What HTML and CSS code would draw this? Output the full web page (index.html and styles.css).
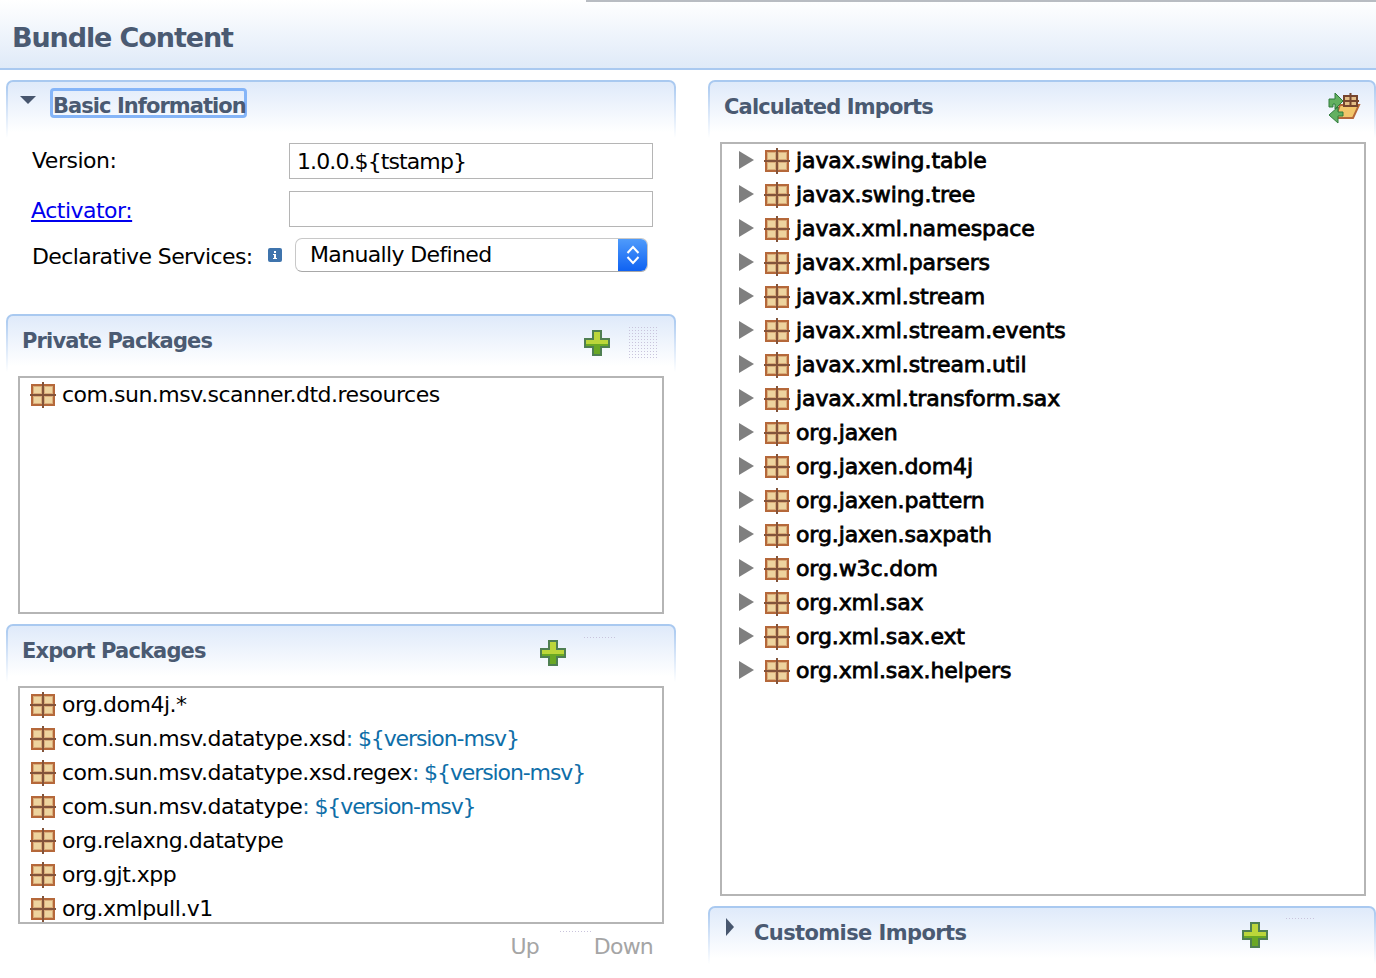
FILE: index.html
```html
<!DOCTYPE html>
<html lang="en">
<head>
  <meta charset="UTF-8" />
  <title>Bundle Content</title>
  <link rel="stylesheet" href="styles.css">
</head>
<body>
  <svg class="defs" width="0" height="0">
    <symbol id="pkg" viewBox="0 0 26 26">
      <rect x="2" y="3" width="22" height="20" fill="#d9ad7a" stroke="#b5683a" stroke-width="2"/>
      <rect x="4" y="5" width="7" height="6" fill="#eed49e"/>
      <rect x="15" y="5" width="7" height="6" fill="#eed49e"/>
      <rect x="4" y="15" width="7" height="6" fill="#eed49e"/>
      <rect x="15" y="15" width="7" height="6" fill="#eed49e"/>
      <path d="M13 0v26M0 13h26" stroke="#83543a" stroke-width="2"/>
    </symbol>
    <symbol id="plus" viewBox="0 0 26 26">
      <path d="M8 0h10v8h8v10h-8v8H8v-8H0V8h8z" fill="#4f7f52"/>
      <path d="M10 2h6v8h8v6h-8v8h-6v-8H2v-6h8z" fill="#6aa824"/>
      <path d="M10 2h6v8h8v4H2v-4h8z" fill="#bcd63a"/>
    </symbol>
  </svg>

  <header class="page-head">
    <h1>Bundle Content</h1>
  </header>

  <main class="columns">
    <div class="col col-left">
      <section class="sect sect-basic">
        <div class="sect-head">
          <div class="sect-inner">
            <span class="twist twist-open"></span>
            <h2 class="focus-box">Basic Information</h2>
          </div>
        </div>
        <div class="form">
          <div class="form-row row-version">
            <label>Version:</label>
            <div class="field">1.0.0.${tstamp}</div>
          </div>
          <div class="form-row row-activator">
            <a href="#">Activator:</a>
            <div class="field"></div>
          </div>
          <div class="form-row row-ds">
            <label>Declarative Services:</label>
            <svg class="info" width="14" height="14" viewBox="0 0 14 14">
              <rect width="14" height="14" rx="2" fill="#3f74ad"/>
              <path d="M6 3h2v2H6zM5 6h3v4h1v1H5v-1h1V7H5z" fill="#fff"/>
            </svg>
            <div class="select">
              <span class="select-text">Manually Defined</span>
              <span class="select-btn">
                <svg width="14" height="24" viewBox="0 0 14 24">
                  <path d="M1.500 10 7 4l5.500 6M1.500 14 7 20l5.500-6" fill="none" stroke="#fff" stroke-width="2"/>
                </svg>
              </span>
            </div>
          </div>
        </div>
      </section>

      <section class="sect sect-private">
        <div class="sect-head">
          <div class="sect-inner">
            <h2>Private Packages</h2>
            <svg class="act act-private" width="26" height="26"><use href="#plus"/></svg>
          </div>
        </div>
        <ul class="list list-private">
          <li><svg class="pkg" width="26" height="26"><use href="#pkg"/></svg>com.sun.msv.scanner.dtd.resources</li>
        </ul>
      </section>

      <section class="sect sect-export">
        <div class="sect-head">
          <div class="sect-inner">
            <h2>Export Packages</h2>
            <svg class="act act-export" width="26" height="26"><use href="#plus"/></svg>
          </div>
        </div>
        <ul class="list list-export">
          <li><svg class="pkg" width="26" height="26"><use href="#pkg"/></svg>org.dom4j.*</li>
          <li><svg class="pkg" width="26" height="26"><use href="#pkg"/></svg>com.sun.msv.datatype.xsd<span class="ver">: ${version-msv}</span></li>
          <li><svg class="pkg" width="26" height="26"><use href="#pkg"/></svg>com.sun.msv.datatype.xsd.regex<span class="ver">: ${version-msv}</span></li>
          <li><svg class="pkg" width="26" height="26"><use href="#pkg"/></svg>com.sun.msv.datatype<span class="ver">: ${version-msv}</span></li>
          <li><svg class="pkg" width="26" height="26"><use href="#pkg"/></svg>org.relaxng.datatype</li>
          <li><svg class="pkg" width="26" height="26"><use href="#pkg"/></svg>org.gjt.xpp</li>
          <li><svg class="pkg" width="26" height="26"><use href="#pkg"/></svg>org.xmlpull.v1</li>
        </ul>
        <div class="updown">
          <span>Up</span>
          <span>Down</span>
        </div>
      </section>
    </div>

    <div class="col col-right">
      <section class="sect sect-calc">
        <div class="sect-head">
          <div class="sect-inner">
            <h2>Calculated Imports</h2>
            <svg class="act act-calc" width="34" height="34" viewBox="0 0 34 34">
              <path d="M13 14h19l-6 13H8z" fill="#f2c66a" stroke="#b5683a" stroke-width="2"/>
              <path d="M17 5h13v10H17z" fill="#e3bd85" stroke="#75452f" stroke-width="2"/>
              <path d="M23.500 2v14M15 10h17" stroke="#75452f" stroke-width="2"/>
              <path d="M2 8h6V2l8 8-8 8v-5H6v3H2z" fill="#63b060" stroke="#2f7a3a"/>
              <path d="M16 25h-5v7l-9-8 9-8v5h5z" fill="#63b060" stroke="#2f7a3a"/>
            </svg>
          </div>
        </div>
        <ul class="list tree">
          <li><span class="twist twist-closed"></span><svg class="pkg" width="26" height="26"><use href="#pkg"/></svg>javax.swing.table</li>
          <li><span class="twist twist-closed"></span><svg class="pkg" width="26" height="26"><use href="#pkg"/></svg>javax.swing.tree</li>
          <li><span class="twist twist-closed"></span><svg class="pkg" width="26" height="26"><use href="#pkg"/></svg>javax.xml.namespace</li>
          <li><span class="twist twist-closed"></span><svg class="pkg" width="26" height="26"><use href="#pkg"/></svg>javax.xml.parsers</li>
          <li><span class="twist twist-closed"></span><svg class="pkg" width="26" height="26"><use href="#pkg"/></svg>javax.xml.stream</li>
          <li><span class="twist twist-closed"></span><svg class="pkg" width="26" height="26"><use href="#pkg"/></svg>javax.xml.stream.events</li>
          <li><span class="twist twist-closed"></span><svg class="pkg" width="26" height="26"><use href="#pkg"/></svg>javax.xml.stream.util</li>
          <li><span class="twist twist-closed"></span><svg class="pkg" width="26" height="26"><use href="#pkg"/></svg>javax.xml.transform.sax</li>
          <li><span class="twist twist-closed"></span><svg class="pkg" width="26" height="26"><use href="#pkg"/></svg>org.jaxen</li>
          <li><span class="twist twist-closed"></span><svg class="pkg" width="26" height="26"><use href="#pkg"/></svg>org.jaxen.dom4j</li>
          <li><span class="twist twist-closed"></span><svg class="pkg" width="26" height="26"><use href="#pkg"/></svg>org.jaxen.pattern</li>
          <li><span class="twist twist-closed"></span><svg class="pkg" width="26" height="26"><use href="#pkg"/></svg>org.jaxen.saxpath</li>
          <li><span class="twist twist-closed"></span><svg class="pkg" width="26" height="26"><use href="#pkg"/></svg>org.w3c.dom</li>
          <li><span class="twist twist-closed"></span><svg class="pkg" width="26" height="26"><use href="#pkg"/></svg>org.xml.sax</li>
          <li><span class="twist twist-closed"></span><svg class="pkg" width="26" height="26"><use href="#pkg"/></svg>org.xml.sax.ext</li>
          <li><span class="twist twist-closed"></span><svg class="pkg" width="26" height="26"><use href="#pkg"/></svg>org.xml.sax.helpers</li>
        </ul>
      </section>

      <section class="sect sect-custom">
        <div class="sect-head">
          <div class="sect-inner">
            <span class="twist twist-side"></span>
            <h2>Customise Imports</h2>
            <svg class="act act-custom" width="26" height="26"><use href="#plus"/></svg>
          </div>
        </div>
      </section>
    </div>
  </main>

  <span class="noise noise-block"></span>
  <span class="noise noise-a"></span>
  <span class="noise noise-b"></span>
  <span class="noise noise-c"></span>
</body>
</html>
```

FILE: styles.css
```css
body {
  margin: 0;
  width: 1376px;
  height: 978px;
  overflow: hidden;
  background: #fff;
  color: #000;
  font-family: "DejaVu Sans", "Liberation Sans", sans-serif;
  font-size: 22px;
  letter-spacing: -0.5px;
}
.defs {
  display: block;
}
.page-head {
  height: 68px;
  border-bottom: 2px solid #a9c9f0;
  background: linear-gradient(#fff, #dfeaf8);
  position: relative;
}
.page-head::before {
  content: "";
  position: absolute;
  top: 0;
  left: 586px;
  right: 0;
  height: 2px;
  background: #b8bcc2;
}
h1 {
  margin: 0;
  padding: 19px 0 0 12px;
  font-size: 27px;
  line-height: 38px;
  font-weight: 700;
  letter-spacing: -1.1px;
  color: #4a5a72;
}
h2 {
  margin: 0;
  font-size: 21px;
  line-height: 30px;
  font-weight: 700;
  letter-spacing: -0.85px;
  color: #4a5a72;
}
.columns {
  display: flex;
  padding: 10px 0 0 6px;
  gap: 32px;
}
.col-left {
  width: 670px;
}
.col-right {
  width: 668px;
}
.sect-head {
  height: 56px;
  padding: 2px 2px 0;
  border-radius: 7px 7px 0 0;
  background: linear-gradient(#a9c9f0, #a9c9f0 4px, #d5e4f8 30px, #fff);
}
.sect-inner {
  height: 56px;
  border-radius: 5px 5px 0 0;
  background: linear-gradient(#dfeafa, #fff 90%);
  display: flex;
  align-items: flex-start;
  padding: 10px 0 0 14px;
  box-sizing: border-box;
}
.act {
  filter: blur(0.3px);
}
.act-private {
  margin: 4px 64px 0 auto;
}
.act-export {
  margin: 4px 108px 0 auto;
}
.act-calc {
  margin: -1px 13px 0 auto;
}
.act-custom {
  margin: 4px 106px 0 auto;
}
.noise {
  position: absolute;
  background: radial-gradient(#c9c4dc 1px, transparent 1px) 0 0 / 3px 3px;
}
.noise-block {
  left: 628px;
  top: 326px;
  width: 30px;
  height: 32px;
}
.noise-a {
  left: 583px;
  top: 636px;
  width: 32px;
  height: 4px;
}
.noise-b {
  left: 559px;
  top: 930px;
  width: 32px;
  height: 4px;
}
.noise-c {
  left: 1285px;
  top: 917px;
  width: 30px;
  height: 4px;
}
.twist {
  display: block;
  width: 0;
  height: 0;
}
.twist-open {
  margin: 4px 14px 0 -2px;
  border-left: 8px solid transparent;
  border-right: 8px solid transparent;
  border-top: 8px solid #47566e;
}
.twist-side {
  margin: 0 20px 0 2px;
  border-top: 9px solid transparent;
  border-bottom: 9px solid transparent;
  border-left: 8px solid #47566e;
}
.twist-closed {
  margin: 0 10px 0 17px;
  border-top: 9px solid transparent;
  border-bottom: 9px solid transparent;
  border-left: 15px solid #7f7f7f;
}
.focus-box {
  margin: -4px 0 0 0;
  width: 197px;
  height: 30px;
  box-sizing: border-box;
  border: 3px solid #85b5f8;
  border-radius: 4px;
  line-height: 31px;
  letter-spacing: -0.95px;
  white-space: nowrap;
}
.form {
  height: 176px;
  padding-top: 5px;
  box-sizing: border-box;
}
.form-row {
  display: flex;
  align-items: center;
  padding-left: 26px;
}
.form-row label {
  white-space: nowrap;
}
.form-row a {
  color: #0000ee;
  margin: 2px 0 0 -1px;
}
.row-version label {
  margin-top: -2px;
}
.row-version,
.row-activator {
  height: 36px;
  margin-bottom: 12px;
}
.field {
  margin-left: auto;
  margin-right: 23px;
  width: 364px;
  height: 36px;
  box-sizing: border-box;
  border: 1px solid #b5b5b5;
  padding: 0 7px;
  line-height: 36px;
  letter-spacing: -0.9px;
}
.row-ds {
  height: 34px;
  margin-top: -1px;
}
.row-ds label {
  width: 236px;
  margin-top: 2px;
  letter-spacing: -0.6px;
}
.info {
  flex: none;
}
.select {
  flex: none;
  margin-left: 13px;
  width: 353px;
  height: 34px;
  box-sizing: border-box;
  border: 1px solid #c8c8c8;
  border-bottom-color: #a8a8a8;
  border-radius: 7px;
  display: flex;
  justify-content: space-between;
  overflow: hidden;
}
.select-text {
  padding-left: 14px;
  line-height: 32px;
  letter-spacing: -0.65px;
}
.select-btn {
  width: 29px;
  background: linear-gradient(#4f9bfb, #0f62f2);
  display: flex;
  align-items: center;
  justify-content: center;
}
.sect-export {
  margin-top: 10px;
}
.list {
  list-style: none;
  margin: 4px 12px 0;
  padding: 0;
  border: 2px solid #b5b5b5;
  height: 238px;
  box-sizing: border-box;
  overflow: hidden;
}
.list li {
  height: 34px;
  box-sizing: border-box;
  display: flex;
  align-items: center;
  padding: 0 0 2px 10px;
  white-space: pre;
}
.pkg {
  flex: none;
  margin: 2px 6px 0 0;
  filter: blur(0.4px);
}
.ver {
  color: #0e6ea8;
  letter-spacing: -1.1px;
}
.tree {
  height: 754px;
  letter-spacing: -0.1px;
  -webkit-text-stroke: 0.8px #000;
}
.tree li {
  padding-left: 0;
}
.sect-calc .list {
  margin-right: 10px;
}
.updown {
  display: flex;
  justify-content: flex-end;
  gap: 55px;
  padding: 10px 23px 0 0;
  color: #a5a5a5;
  letter-spacing: -0.8px;
}
.sect-custom {
  margin-top: 10px;
}
.sect-custom h2 {
  letter-spacing: -0.6px;
}
```
